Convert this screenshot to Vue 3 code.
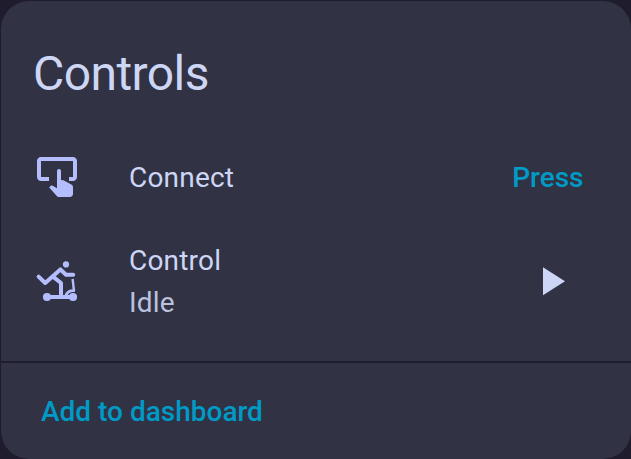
<script setup>
const title = 'Controls'
</script>

<template>
  <main class="card">
    <h1>{{ title }}</h1>
    <section class="row">
      <svg class="icon" viewBox="0 0 24 24">
        <path d="M20 2H4C2.9 2 2 2.9 2 4V12C2 13.11 2.9 14 4 14H8V12H4V4H20V12H18V14H20C21.13 14 22 13.1 22 12V4C22 2.9 21.11 2 20 2ZM12 9A1 1 0 0 1 14 9V13.47L15.21 13.6L19.15 15.79C19.68 16.03 20 16.56 20 17.14V20.5C19.97 21.32 19.32 21.97 18.5 22H13C12.62 22 12.26 21.85 12 21.57L8.1 17.2L8.5 16.7C8.75 16.39 9 16.28 9.38 16.28H9.6L12 17.6Z" />
      </svg>
      <div class="label">Connect</div>
      <button class="press">Press</button>
    </section>
    <section class="row second">
      <svg class="icon" viewBox="0 0 24 24">
        <circle cx="16.5" cy="3.7" r="1.55" />
        <circle cx="7" cy="20" r="2.05" />
        <circle cx="20" cy="20" r="2.05" />
        <g class="lines">
          <path d="M2.8 9.8L6.1 13L13.7 6.2L16.5 8.9H20.1" />
          <path d="M10.6 10.3L14 13V20M7 20H20" />
          <path class="thin" d="M19.8 11L20.5 16.8" />
          <path class="fender" d="M16.5 19.2C17 17.5 18.7 16.6 21 16.8" />
        </g>
      </svg>
      <div class="label">Control<span>Idle</span></div>
      <svg class="icon play" viewBox="0 0 24 24"><path d="M8 5.14V19.14L19 12.14Z" /></svg>
    </section>
    <footer><button>Add to dashboard</button></footer>
  </main>
</template>

<style>
body { background: #1e1c2d; }
</style>

<style scoped>
.card {
  box-sizing: border-box;
  width: 630px;
  height: 458px;
  margin: 1px 0 0 1px;
  background: #313244;
  border-radius: 28px;
  color: #cdd6f4;
  font: 28px/42px Roboto, sans-serif;
  overflow: hidden;
}
h1 {
  margin: 0;
  padding: 25px 32px 0;
  height: 120px;
  box-sizing: border-box;
  font-size: 48px;
  line-height: 96px;
  font-weight: 400;
  letter-spacing: -0.576px;
}
.row {
  display: flex;
  align-items: center;
  height: 112px;
  padding: 0 47.5px 0 32px;
}
.second { height: 96px; }
.icon {
  width: 48px;
  height: 48px;
  flex: none;
  fill: #b4befe;
}
.label { flex: 1; padding-top: 2px; margin-left: 48px; letter-spacing: 0.2px; }
.label span { display: block; color: #bac2de; }
.lines {
  fill: none;
  stroke: #b4befe;
  stroke-width: 2;
  stroke-linecap: round;
  stroke-linejoin: round;
}
.lines .thin { stroke-width: 1.2; stroke-linecap: butt; }
.lines .fender { stroke-width: 1.4; stroke-linecap: butt; }
.play { fill: #cdd6f4; margin-right: 8.5px; }
button {
  padding: 0;
  border: 0;
  background: none;
  color: #009ac7;
  font: 500 28px/42px Roboto, sans-serif;
}
.press { padding-top: 2px; }
footer {
  box-sizing: border-box;
  height: 98px;
  margin-top: 32px;
  padding: 28px 40px;
  border-top: 2px solid #1e1e2e;
}
</style>
